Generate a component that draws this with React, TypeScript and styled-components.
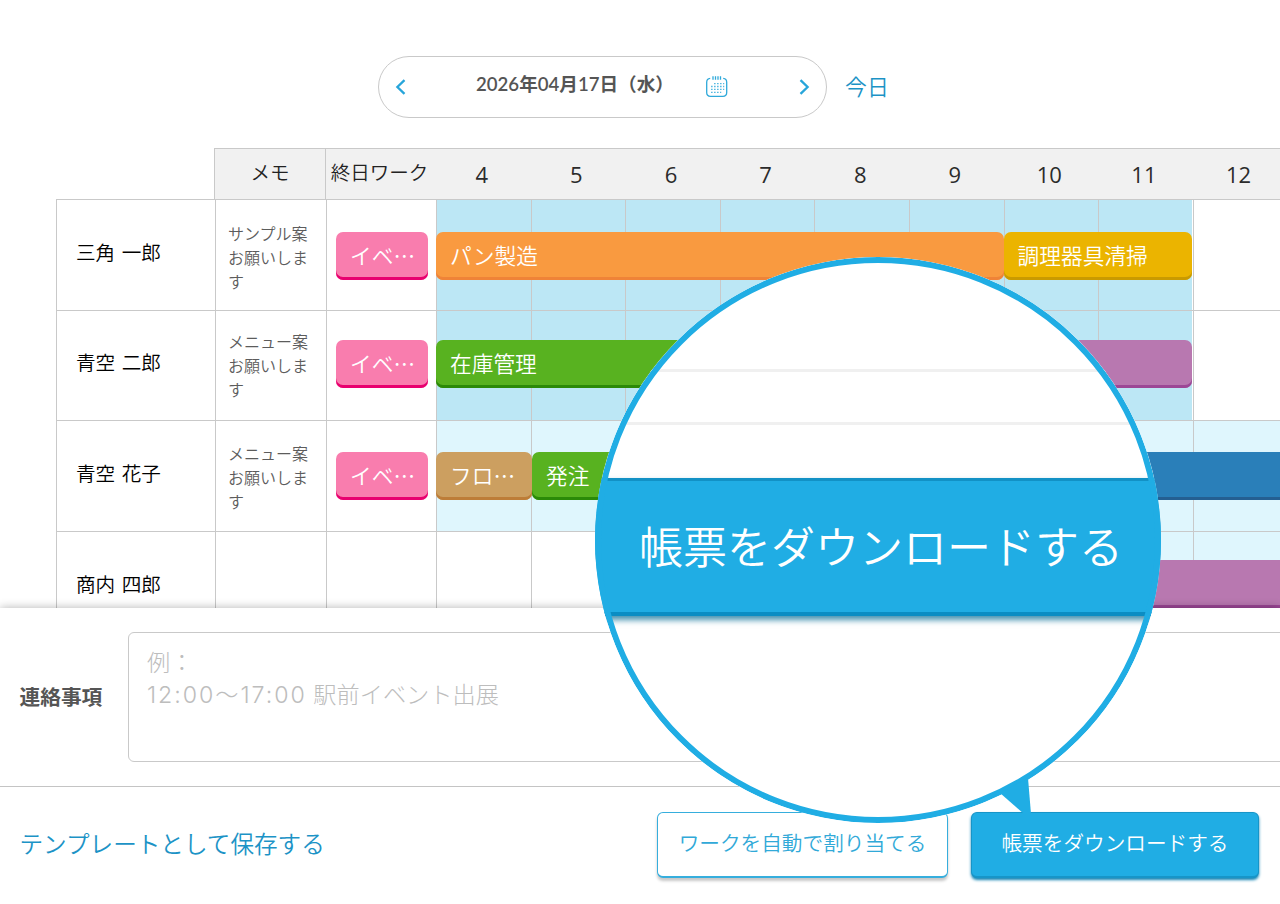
import React from "react";
import styled, { createGlobalStyle } from "styled-components";

const JP = `"Noto Sans CJK JP", sans-serif`;
const LINE = "#c9c9c9";
const BLUE = "#20ade4";
const LINK = "#1c93c6";

const GlobalStyle = createGlobalStyle`
  *, *::before, *::after { box-sizing: border-box; }
  body { margin: 0; background: #fff; font-family: ${JP}; font-weight: 350; overflow: hidden; }
  button { font: inherit; border: 0; background: none; padding: 0; margin: 0; }
`;

const Screen = styled.div`
  position: relative;
  width: 1280px;
  height: 904px;
  display: flex;
  flex-direction: column;
  overflow: hidden;
  background: #fff;
`;

const Board = styled.main`
  height: 608px;
  overflow: hidden;
  display: flex;
  flex-direction: column;
`;

const DateBar = styled.div`
  height: 148px;
  flex: none;
  padding: 56px 0 0 378px;
  display: flex;
  align-items: flex-start;
  gap: 18px;
`;

const DatePicker = styled.div`
  width: 449px;
  height: 62px;
  border: 1.5px solid ${LINE};
  border-radius: 31px;
  display: flex;
  align-items: center;
  padding: 0 16px 0 16px;
`;

const DateText = styled.div`
  width: 229px;
  margin-left: 69px;
  font-family: Lato, ${JP};
  font-size: 18.6px;
  font-weight: 600;
  color: #555;
  line-height: 28px;
  margin-top: -6px;
  white-space: nowrap;
`;

const ArrowButton = styled.button<{ $end?: boolean }>`
  display: flex;
  margin-left: ${(p) => (p.$end ? "auto" : "0")};
`;

const TodayButton = styled.button`
  height: 60px;
  font-size: 21.9px;
  line-height: 58px;
  color: ${LINK};
`;

const HOURS = "repeat(9, 94.6px)";

const HeadRow = styled.div`
  display: grid;
  grid-template-columns: 111px 111px ${HOURS};
  width: max-content;
  height: 51px;
  flex: none;
  margin-left: 214px;
  background: #f1f1f1;
  border-top: 1px solid ${LINE};
  border-left: 1px solid ${LINE};
`;

const HeadCell = styled.div<{ $divider?: boolean }>`
  border-right: ${(p) => (p.$divider ? `1px solid ${LINE}` : "0")};
  padding-right: ${(p) => (p.$divider ? 0 : 4)}px;
  font-size: 19.5px;
  line-height: 45px;
  color: #222;
  text-align: center;
  white-space: nowrap;
`;

const HourCell = styled.div`
  font-family: "Open Sans", sans-serif;
  font-weight: 400;
  font-size: 22px;
  line-height: 50px;
  color: #2b2b2b;
  padding-right: 5px;
  text-align: center;
`;

const StaffRow = styled.div<{ $h: number }>`
  display: grid;
  grid-template-columns: 159px 111px 110px ${HOURS};
  width: max-content;
  height: ${(p) => p.$h}px;
  flex: none;
  margin-left: 56px;
  border-top: 1px solid ${LINE};
`;

const Cell = styled.div<{ $col: number; $tint?: string; $short?: boolean }>`
  grid-row: 1;
  grid-column: ${(p) => p.$col};
  border-left: 1px solid ${LINE};
  background: linear-gradient(${(p) => p.$tint ?? "transparent"}, ${(p) => p.$tint ?? "transparent"}) 0 0 /
    ${(p) => (p.$short ? "calc(100% - 1px)" : "100%")} 100% no-repeat;
  min-width: 0;
`;

const NameCell = styled(Cell)`
  padding: 0 0 8px 19px;
  display: flex;
  align-items: center;
  font-size: 19.6px;
  word-spacing: 2.2px;
  color: #000;
`;

const MemoCell = styled(Cell)<{ $top: number }>`
  padding: ${(p) => p.$top - 11}px 14px 0 12px;
  font-size: 16px;
  line-height: 24px;
  color: #5c5c5c;
`;

const AllDayCell = styled(Cell)<{ $top: number }>`
  padding: ${(p) => p.$top}px 8px 0 9px;
`;

const Work = styled.div<{ $bg: string; $edge: string; $open?: boolean }>`
  height: 48px;
  border-radius: ${(p) => (p.$open ? "7px 0 0 7px" : "7px")};
  background: ${(p) => p.$bg};
  box-shadow: inset 0 -3px 0 ${(p) => p.$edge};
  color: #fff;
  font-size: 21.7px;
  line-height: 45px;
  padding-left: 14px;
  white-space: nowrap;
  overflow: hidden;
`;

const PlacedWork = styled(Work)<{ $from: number; $span: number; $top: number; $trim?: number; $shift?: number }>`
  grid-row: 1;
  grid-column: ${(p) => p.$from} / span ${(p) => p.$span};
  margin-top: ${(p) => p.$top}px;
  margin-right: ${(p) => p.$trim ?? 0}px;
  margin-left: ${(p) => p.$shift ?? 0}px;
`;

const Footer = styled.footer`
  position: relative;
  height: 296px;
  background: #fff;
  box-shadow: 0 0 9px rgba(0, 0, 0, 0.3);
  display: flex;
  flex-direction: column;
`;

const NoticeRow = styled.div`
  height: 179px;
  border-bottom: 1px solid #c4c4c4;
  display: flex;
  align-items: center;
  padding-left: 19.5px;
`;

const NoticeLabel = styled.label`
  width: 108.5px;
  font-size: 20.7px;
  line-height: 30px;
  padding-bottom: 2px;
  font-weight: 700;
  color: #555;
`;

const NoticeBox = styled.div`
  flex: 1;
  height: 130px;
  margin-right: -12px;
  border: 1.5px solid ${LINE};
  border-radius: 6px;
  padding: 12px 18px;
  font-size: 23.2px;
  line-height: 32px;
  font-weight: 300;
  color: #bdbdbd;
`;

const TimeRange = styled.span`
  font-family: Inter, ${JP};
  letter-spacing: 1.95px;
  margin-right: 1.5px;
`;

const ActionRow = styled.div`
  flex: 1;
  display: flex;
  align-items: flex-start;
  padding: 25px 21px 0 19.5px;
`;

const TemplateLink = styled.button`
  font-size: 23.6px;
  line-height: 62px;
  color: ${LINK};
  margin-right: auto;
  white-space: nowrap;
`;

const ActionButton = styled.button<{ $primary?: boolean }>`
  width: ${(p) => (p.$primary ? 288 : 291)}px;
  height: 66px;
  margin-left: ${(p) => (p.$primary ? 23 : 0)}px;
  border: 1.5px solid ${(p) => (p.$primary ? "#1795c8" : "#36aedd")};
  border-bottom-width: 2px;
  border-radius: 6px;
  background: ${(p) => (p.$primary ? BLUE : "#fff")};
  color: ${(p) => (p.$primary ? "#fff" : "#31a9d8")};
  box-shadow: ${(p) => (p.$primary ? "0 2px 3px #1184b4" : "0 3px 3px rgba(0,0,0,.22)")};
  font-size: 20.65px;
  line-height: 57px;
  padding: 0 0 5px 0;
  white-space: nowrap;
`;

const Lens = styled.div`
  position: absolute;
  left: 595px;
  top: 257px;
  width: 566px;
  height: 566px;
  border-radius: 50%;
  background: #fff;
  overflow: hidden;
  display: flex;
  flex-direction: column;

  &::after {
    content: "";
    position: absolute;
    inset: 0;
    border: 6px solid ${BLUE};
    border-radius: 50%;
  }
`;

const LensRule = styled.div<{ $gap: number }>`
  flex: none;
  margin-top: ${(p) => p.$gap}px;
  height: 3px;
  background: #f0f0f0;
`;

const LensButton = styled.div`
  flex: none;
  margin-top: 53px;
  height: 138px;
  background: ${BLUE};
  border-top: 3px solid #1291c5;
  border-bottom: 4px solid #0b8dc3;
  box-shadow: 0 4px 6px rgba(8, 110, 150, 0.75);
  color: #fff;
  font-size: 44px;
  line-height: 129px;
  padding-left: 6px;
  text-align: center;
  white-space: nowrap;
`;

const LensTail = styled.svg`
  position: absolute;
  left: 1000px;
  top: 776px;
`;

const Arrow = ({ next }: { next?: boolean }) => (
  <svg width="12" height="18" viewBox="0 0 12 18" fill="none" stroke="#27a5da" strokeWidth="2.3">
    <path d={next ? "M2.5 2.2 9.6 9 2.5 15.8" : "M9.5 2.2 2.4 9 9.5 15.8"} />
  </svg>
);

const CalendarIcon = () => (
  <svg width="24" height="24" viewBox="0 0 24 24" fill="none" stroke="#2fa9da" strokeWidth="1.3">
    <path d="M5.2 3.4C2.8 3.6 1.7 4.8 1.7 7.2V17.6c0 2.6 1.2 3.8 3.8 3.8h12.4c2.6 0 3.8-1.2 3.8-3.8V7.2c0-2.4-1.1-3.6-3.5-3.8M8 1.2v3.6M10.5 1.2v3.6M13 1.2v3.6M15.5 1.2v3.6" />
    <path
      d="M9.2 8.6h10M6.2 11.5h13M6.2 14.4h13M6.2 17.3h10"
      strokeDasharray="1.3 1.7"
      strokeWidth="1.3"
    />
  </svg>
);

type WorkItem = {
  label: string;
  bg: string;
  edge: string;
  from: number;
  span: number;
  trim?: number;
  shift?: number;
  open?: boolean;
};
type Staff = {
  name: string;
  memo?: string;
  h: number;
  top: number;
  tints: (string | undefined)[];
  works: WorkItem[];
};

const SHIFT = "#bce7f5";
const PALE = "#dff6fd";
const fill = (n: number, v?: string): (string | undefined)[] => Array(n).fill(v);

const staff: Staff[] = [
  {
    name: "三角 一郎", memo: "サンプル案お願いします", h: 111, top: 32,
    tints: [...fill(8, SHIFT), undefined],
    works: [
      { label: "パン製造", bg: "#f99a40", edge: "#ef8338", from: 4, span: 6 },
      { label: "調理器具清掃", bg: "#ebb400", edge: "#c99a00", from: 10, span: 2, trim: 1 },
    ],
  },
  {
    name: "青空 二郎", memo: "メニュー案お願いします", h: 110, top: 29,
    tints: [...fill(8, SHIFT), undefined],
    works: [
      { label: "在庫管理", bg: "#58b220", edge: "#2b8a08", from: 4, span: 4 },
      { label: "", bg: "#b878b0", edge: "#9c4796", from: 8, span: 4, trim: 1 },
    ],
  },
  {
    name: "青空 花子", memo: "メニュー案お願いします", h: 111, top: 31,
    tints: fill(9, PALE),
    works: [
      { label: "フロ…", bg: "#cc9f60", edge: "#bd7d38", from: 4, span: 1, trim: -1.4 },
      { label: "発注", bg: "#58b220", edge: "#2b8a08", from: 5, span: 3, shift: 1.4 },
      { label: "", bg: "#2a7fb9", edge: "#245f92", from: 8, span: 5, open: true },
    ],
  },
  {
    name: "商内 四郎", h: 111, top: 28,
    tints: [...fill(4), ...fill(5, PALE)],
    works: [{ label: "", bg: "#b878b0", edge: "#9c4796", from: 8, span: 5, open: true }],
  },
];

export default function App() {
  return (
    <>
      <GlobalStyle />
      <Screen>
        <Board>
          <DateBar>
            <DatePicker>
              <ArrowButton aria-label="前の日"><Arrow /></ArrowButton>
              <DateText>2026年04月17日（水）</DateText>
              <CalendarIcon />
              <ArrowButton $end aria-label="次の日"><Arrow next /></ArrowButton>
            </DatePicker>
            <TodayButton>今日</TodayButton>
          </DateBar>
          <HeadRow>
            <HeadCell $divider>メモ</HeadCell>
            <HeadCell>終日ワーク</HeadCell>
            {[4, 5, 6, 7, 8, 9, 10, 11, 12].map((h) => <HourCell key={h}>{h}</HourCell>)}
          </HeadRow>
          {staff.map((s) => (
            <StaffRow key={s.name} $h={s.h}>
              <NameCell $col={1}>{s.name}</NameCell>
              <MemoCell $col={2} $top={s.top}>{s.memo}</MemoCell>
              <AllDayCell $col={3} $top={s.top}>
                {s.memo && <Work $bg="#f97dae" $edge="#e8006f">イベ…</Work>}
              </AllDayCell>
              {s.tints.map((t, i) => (
                <Cell key={i} $col={i + 4} $tint={t} $short={i === 7 && s.tints[8] === undefined} />
              ))}
              {s.works.map((w, i) => (
                <PlacedWork
                  key={i}
                  $bg={w.bg}
                  $edge={w.edge}
                  $from={w.from}
                  $span={w.span}
                  $top={s.top}
                  $trim={w.trim}
                  $shift={w.shift}
                  $open={w.open}
                >
                  {w.label}
                </PlacedWork>
              ))}
            </StaffRow>
          ))}
        </Board>
        <Footer>
          <NoticeRow>
            <NoticeLabel>連絡事項</NoticeLabel>
            <NoticeBox>例：<br /><TimeRange>12:00〜17:00</TimeRange> 駅前イベント出展</NoticeBox>
          </NoticeRow>
          <ActionRow>
            <TemplateLink>テンプレートとして保存する</TemplateLink>
            <ActionButton>ワークを自動で割り当てる</ActionButton>
            <ActionButton $primary>帳票をダウンロードする</ActionButton>
          </ActionRow>
        </Footer>
        <Lens>
          <LensRule $gap={112} />
          <LensRule $gap={50} />
          <LensButton>帳票をダウンロードする</LensButton>
        </Lens>
        <LensTail width="34" height="40" viewBox="0 0 34 40">
          <path d="M0 17 24 38h7L28 2Z" fill={BLUE} />
        </LensTail>
      </Screen>
    </>
  );
}
